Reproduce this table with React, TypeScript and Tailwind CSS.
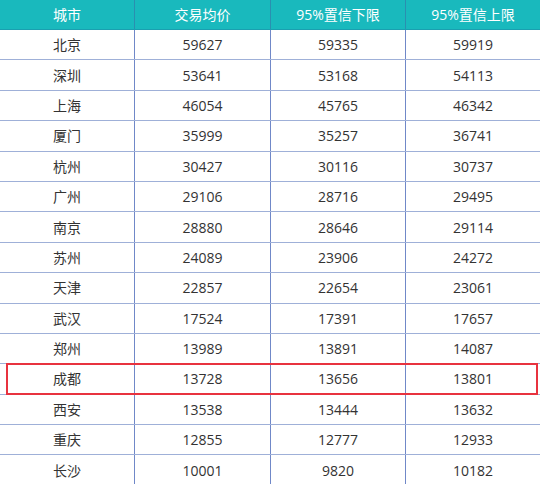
const rows = [
  ["北京", "59627", "59335", "59919"],
  ["深圳", "53641", "53168", "54113"],
  ["上海", "46054", "45765", "46342"],
  ["厦门", "35999", "35257", "36741"],
  ["杭州", "30427", "30116", "30737"],
  ["广州", "29106", "28716", "29495"],
  ["南京", "28880", "28646", "29114"],
  ["苏州", "24089", "23906", "24272"],
  ["天津", "22857", "22654", "23061"],
  ["武汉", "17524", "17391", "17657"],
  ["郑州", "13989", "13891", "14087"],
  ["成都", "13728", "13656", "13801"],
  ["西安", "13538", "13444", "13632"],
  ["重庆", "12855", "12777", "12933"],
  ["长沙", "10001", "9820", "10182"],
];

const headers = ["城市", "交易均价", "95%置信下限", "95%置信上限"];

export default function App() {
  return (
    <div
      className="w-[540px] h-[484px] overflow-hidden bg-white text-[14px]"
      style={{ fontFamily: '"Open Sans", "Noto Sans CJK SC", sans-serif' }}
    >
      {/* Header */}
      <div className="grid grid-cols-[135px_136px_135px_134px] h-[30px] bg-[#19b9bd] border-b border-[#1a9fb0] text-white">
        {headers.map((h, i) => (
          <div
            key={h}
            className={`flex items-center justify-center ${i < 3 ? "border-r border-[#2a8fb0]" : ""}`}
          >
            {h}
          </div>
        ))}
      </div>

      {/* Body */}
      {rows.map((r) => (
        <div
          key={r[0]}
          className="relative grid grid-cols-[135px_136px_135px_134px] h-[30.4px] border-b border-[#9fb0d8] text-[#333333]"
        >
          {r.map((c, i) => (
            <div
              key={i}
              className={`flex items-center justify-center ${i < 3 ? "border-r border-[#7088c8]" : ""}`}
            >
              {c}
            </div>
          ))}
          {r[0] === "成都" && (
            <div className="absolute left-[6px] right-[2px] -top-[1px] -bottom-[1px] border-2 border-[#e8333f]" />
          )}
        </div>
      ))}
    </div>
  );
}
